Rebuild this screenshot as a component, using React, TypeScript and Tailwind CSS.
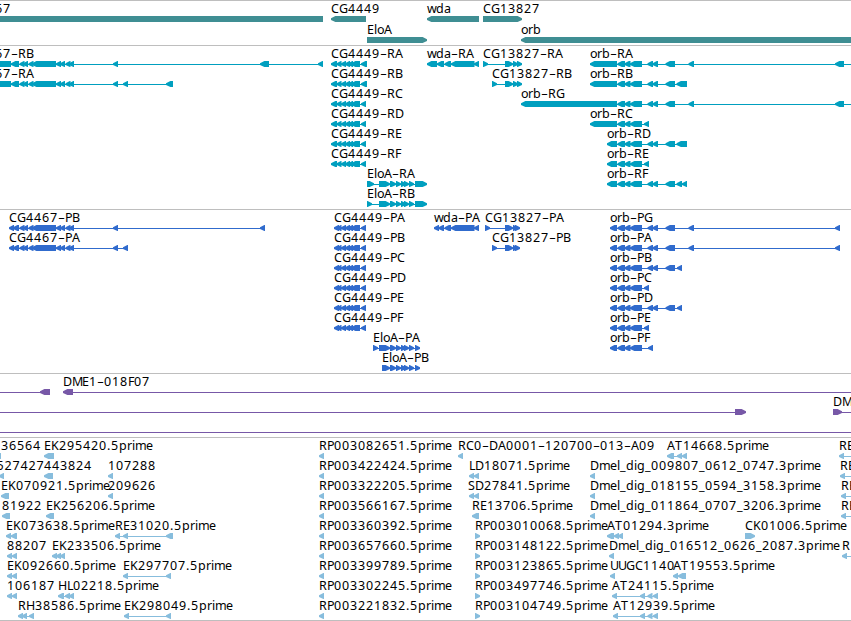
type Span = [number, number];

type Feature = {
  label?: string;
  x?: number;
  spans: Span[];
  forward?: boolean;
  // where the thin connecting line runs, if not from first to last span
  line?: Span;
};

type TrackProps = {
  rows: Feature[][];
  className: string;
  rowClass?: string;
};

// horizontal advance of each glyph in the label font
const ADVANCE: Record<string, number> = {
  A: 8, B: 7, C: 8, D: 9, E: 7, F: 6, G: 9, H: 9, K: 8, L: 6, M: 10, P: 7,
  R: 8, S: 7, T: 8, U: 8, a: 7, b: 8, d: 8, e: 7, g: 8, i: 3, l: 3, m: 11,
  o: 7, p: 8, r: 5, w: 9, _: 6, "-": 7, ".": 4,
};

// splits a label at its hyphens and gives every glyph its x
function labelRuns(text: string, start: number) {
  let pos = start;
  return text.split(/(-)/).map((run) => {
    const xs = [...run].map((ch) => {
      const x = pos;
      pos += ADVANCE[ch] ?? 8;
      return x;
    });
    return { run, xs };
  });
}

function Label({ text, x }: { text: string; x: number }) {
  return (
    <text y={12} className="fill-black">
      {labelRuns(text, x).map(({ run, xs }, i) =>
        run === "-" ? (
          <tspan key={i} x={xs[0]} textLength={7} lengthAdjust="spacingAndGlyphs">
            -
          </tspan>
        ) : (
          <tspan key={i} x={xs.join(" ")}>
            {run}
          </tspan>
        ),
      )}
    </text>
  );
}

function arrow([s, e]: Span, forward?: boolean) {
  const head = Math.min(4.4, e - s);
  if (forward) {
    return `M${s} 15H${e - head}L${e} 17.3V19L${e - head} 21H${s}Z`;
  }
  return `M${e} 15H${s + head}L${s} 17.3V19L${s + head} 21H${e}Z`;
}

function Glyph({ feature }: { feature: Feature }) {
  const { spans, forward, label } = feature;
  const first = spans[0]?.[0] ?? 0;
  const last = spans[spans.length - 1]?.[1] ?? 0;
  const [from, to] = feature.line ?? [first, last];

  return (
    <g>
      <rect x={from} y={18} width={to - from} height={1} shapeRendering="crispEdges" />
      {spans.map((span, i) => (
        <path key={i} d={arrow(span, forward)} />
      ))}
      {label && <Label text={label} x={feature.x ?? first} />}
    </g>
  );
}

function Track({ rows, className, rowClass = "h-5" }: TrackProps) {
  return (
    <section className={`border-t border-[#bebebe] ${className}`}>
      {rows.map((row, i) => (
        <div key={i} className={rowClass}>
          <svg width={851} height={22} className="block overflow-visible fill-current">
            {row.map((feature, j) => (
              <Glyph key={j} feature={feature} />
            ))}
          </svg>
        </div>
      ))}
    </section>
  );
}

const genes: Feature[][] = [
  [
    { label: "CG4467", x: -38, spans: [[-10, 323]], line: [0, 323] },
    { label: "CG4449", spans: [[331, 366]] },
    { label: "wda", spans: [[427, 479]] },
    { label: "CG13827", spans: [[483, 522]], forward: true },
  ],
  [
    { label: "EloA", spans: [[367, 427]], forward: true },
    { label: "orb", spans: [[521, 860]] },
  ],
];

// exon groups shared by the isoforms of one gene
const cg4467: Span[] = [
  [19.5, 24.5], [23, 28], [28.5, 33.5], [32, 56], [56, 61], [60, 65],
  [65.5, 70.5], [69, 74], [113, 118],
];
const cg4449: Span[] = [[341, 346], [345, 350], [348, 353], [351, 360], [361, 366]];
const wda: Span[] = [[444.5, 451], [451, 474.5], [474, 479]];
const eloA: Span[] = [[390, 396], [396, 401], [401, 406], [404, 409], [409, 414]];
const orb: Span[] = [[617.5, 625], [624.5, 630.5], [630, 642]];
const orbMid: Span[] = [[647.5, 653], [652.5, 658], [665.5, 675]];

const rnaCg4449 = (label: string, end = 366): Feature => ({
  label,
  spans: [[331, 337], [336.5, 341.5], ...cg4449.slice(0, 4), [361, end]],
});
const protCg4449 = (label: string): Feature => ({
  label,
  spans: [[334, 339], [336.5, 341.5], ...cg4449],
});

const transcripts: Feature[][] = [
  [
    { label: "CG4467-RB", x: -38, spans: [[-10, 11], [11, 19], ...cg4467, [260, 269], [318, 323]] },
    rnaCg4449("CG4449-RA", 367),
    { label: "wda-RA", spans: [[427, 437], [437, 444], ...wda] },
    { label: "CG13827-RA", spans: [[483, 488], [505, 513], [513, 518], [517, 522]], forward: true },
    { label: "orb-RA", spans: [[590, 617], ...orb, ...orbMid, [688.5, 694], [835, 844]], line: [590, 851] },
  ],
  [
    { label: "CG4467-RA", x: -38, spans: [[-10, 11], [11, 19], ...cg4467, [123, 128], [166, 173]] },
    rnaCg4449("CG4449-RB", 367),
    { label: "CG13827-RB", spans: [[492, 497], [505, 513], [513, 518], [517, 522]], forward: true },
    { label: "orb-RB", spans: [[590, 617], ...orb, ...orbMid, [676.5, 687]] },
  ],
  [
    rnaCg4449("CG4449-RC"),
    { label: "orb-RG", spans: [[521, 617], ...orb, ...orbMid, [688.5, 694], [835, 844]], line: [521, 851] },
  ],
  [rnaCg4449("CG4449-RD"), { label: "orb-RC", spans: [[590, 617], ...orb, [644, 649]] }],
  [
    rnaCg4449("CG4449-RE"),
    { label: "orb-RD", spans: [[607, 617], ...orb, ...orbMid, [676.5, 687]] },
  ],
  [rnaCg4449("CG4449-RF"), { label: "orb-RE", spans: [[607, 617], ...orb, [644, 649]] }],
  [
    { label: "EloA-RA", spans: [[367, 374], [379, 390], ...eloA, [415, 427]], forward: true },
    { label: "orb-RF", spans: [[607, 617], ...orb, ...orbMid, [676.5, 682], [682, 687]] },
  ],
  [{ label: "EloA-RB", spans: [[367, 372], [379, 390], ...eloA, [415, 427]], forward: true }],
];

const proteins: Feature[][] = [
  [
    { label: "CG4467-PB", spans: [[9, 14], [13, 19], ...cg4467, [260, 265]] },
    protCg4449("CG4449-PA"),
    { label: "wda-PA", spans: [[434, 439], [438.5, 444], ...wda] },
    { label: "CG13827-PA", spans: [[485, 490], [505, 513], [513, 518], [515, 520]], forward: true },
    { label: "orb-PG", spans: [[610, 617], ...orb, ...orbMid, [688.5, 694], [835, 840]] },
  ],
  [
    { label: "CG4467-PA", spans: [[9, 14], [13, 19], ...cg4467, [123, 128]] },
    protCg4449("CG4449-PB"),
    { label: "CG13827-PB", spans: [[492, 497], [505, 513], [513, 518], [515, 520]], forward: true },
    { label: "orb-PA", spans: [[610, 617], ...orb, ...orbMid, [688.5, 694], [835, 840]] },
  ],
  [protCg4449("CG4449-PC"), { label: "orb-PB", spans: [[610, 617], ...orb, ...orbMid, [677, 682]] }],
  [protCg4449("CG4449-PD"), { label: "orb-PC", spans: [[610, 617], ...orb, [644, 649]] }],
  [protCg4449("CG4449-PE"), { label: "orb-PD", spans: [[610, 617], ...orb, ...orbMid, [677, 682]] }],
  [protCg4449("CG4449-PF"), { label: "orb-PE", spans: [[610, 617], ...orb, [644, 649]] }],
  [
    { label: "EloA-PA", spans: [[373, 378], [379, 390], ...eloA, [415, 420]], forward: true },
    { label: "orb-PF", spans: [[610, 617], ...orb, [648, 653]] },
  ],
  [{ label: "EloA-PB", spans: [[382, 390], ...eloA, [415, 420]], forward: true }],
];

const clones: Feature[][] = [
  [
    { spans: [[40, 50]], line: [0, 50] },
    { label: "DME1-018F07", spans: [[63, 73]], line: [63, 851] },
  ],
  [
    { spans: [[735, 746]], line: [0, 746], forward: true },
    { label: "DME1", spans: [[833, 842]], line: [833, 851], forward: true },
  ],
  [{ spans: [], line: [0, 851] }],
];

const rpLeft = (id: string): Feature => ({ label: `RP003${id}.5prime`, spans: [[319, 324]] });
const rpRight = (id: string): Feature => ({
  label: `RP003${id}.5prime`,
  spans: [[475, 480]],
  forward: true,
});
const dmel = (id: string): Feature => ({ label: `Dmel_dig_${id}.3prime`, spans: [[590, 595]] });
const edge = (label: string, x: number): Feature => ({ label, spans: [[x, x + 5]], line: [x, 851] });

const ests: Feature[][] = [
  [
    { label: "36564", x: 1, spans: [[-4, 1]] },
    { label: "EK295420.5prime", spans: [[44, 54]] },
    rpLeft("082651"),
    { label: "RC0-DA0001-120700-013-A09", spans: [[458, 463]] },
    { label: "AT14668.5prime", spans: [[667, 674], [677, 682], [682, 687]] },
    edge("RE", 839),
  ],
  [
    { label: "527427", x: -3.5, spans: [[-1, 4]] },
    { label: "443824", spans: [[44, 53]] },
    { label: "107288", spans: [[108, 113]] },
    rpLeft("422424"),
    { label: "LD18071.5prime", spans: [[469, 474], [474, 479]] },
    dmel("009807_0612_0747"),
    edge("RE", 840),
  ],
  [
    { label: "EK070921.5prime", spans: [[1, 9]] },
    { label: "209626", spans: [[108, 113]] },
    rpLeft("322205"),
    { label: "SD27841.5prime", x: 468, spans: [[469, 474], [474, 479]] },
    dmel("018155_0594_3158"),
    edge("RE", 841),
  ],
  [
    { label: "81922", spans: [[2, 10]] },
    { label: "EK256206.5prime", spans: [[46, 54]] },
    rpLeft("566167"),
    { label: "RE13706.5prime", spans: [[472, 479]] },
    dmel("011864_0707_3206"),
    edge("RE", 841),
  ],
  [
    { label: "EK073638.5prime", spans: [[6, 11], [11, 17]] },
    { label: "RE31020.5prime", spans: [[115, 120], [123, 128], [166, 173]] },
    rpLeft("360392"),
    rpRight("010068"),
    { label: "AT01294.3prime", spans: [[607, 614], [614, 619], [618, 623]] },
    { label: "CK01006.5prime", spans: [[745, 755]], forward: true },
  ],
  [
    { label: "88207", spans: [[7, 12], [12, 17]] },
    { label: "EK233506.5prime", spans: [[52, 57], [56, 61], [60, 65]] },
    rpLeft("657660"),
    rpRight("148122"),
    { label: "Dmel_dig_016512_0626_2087.3prime", spans: [[609, 614]] },
    edge("R", 842),
  ],
  [
    { label: "EK092660.5prime", spans: [[7, 12], [12, 17]] },
    { label: "EK297707.5prime", spans: [[123, 128], [166, 171]] },
    rpLeft("399789"),
    rpRight("123865"),
    { label: "UUGC1140", spans: [[610, 615]] },
    { label: "AT19553.5prime", spans: [[673, 678], [678, 686]] },
  ],
  [
    { label: "106187", spans: [[7, 12], [12, 17]] },
    { label: "HL02218.5prime", spans: [[58, 64], [65, 70], [69, 74]] },
    rpLeft("302245"),
    rpRight("497746"),
    { label: "AT24115.5prime", spans: [[612, 617], [640, 645], [647.5, 652.5], [653, 658]] },
  ],
  [
    { label: "RH38586.5prime", spans: [[18, 23], [22, 27], [29, 34]] },
    { label: "EK298049.5prime", spans: [[124, 129], [166, 171]] },
    rpLeft("221832"),
    rpRight("104749"),
    { label: "AT12939.5prime", spans: [[613, 618], [640, 645], [647.5, 652.5], [653, 658]] },
  ],
];

export default function App() {
  return (
    <main className="flex h-[621px] w-[851px] flex-col overflow-hidden border-b border-[#bebebe] bg-white font-['Noto_Sans',sans-serif] text-[12.5px]">
      <Track rows={genes} className="h-[45px] text-[#3f8e93]" rowClass="h-[21px]" />
      <Track rows={transcripts} className="h-[164px] text-[#009fbf]" />
      <Track rows={proteins} className="h-[164px] text-[#306bcd]" />
      <Track rows={clones} className="h-16 text-[#7758a7]" />
      <Track rows={ests} className="h-[183px] text-[#87bddd]" />
    </main>
  );
}
